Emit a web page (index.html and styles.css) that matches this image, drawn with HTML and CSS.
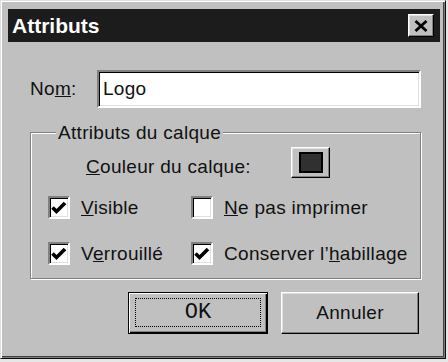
FILE: index.html
```html
<!DOCTYPE html>
<html lang="fr">
<head>
<meta charset="utf-8">
<title>Attributs</title>
<link rel="stylesheet" href="styles.css">
</head>
<body>
<div class="window">
  <div class="titlebar">
    <span class="title">Attributs</span>
    <span class="close">
      <svg width="14" height="12" viewBox="0 0 14 12"><path d="M1.5 1 L12.5 11 M12.5 1 L1.5 11" stroke="#000" stroke-width="2.8" fill="none"/></svg>
    </span>
  </div>
  <div class="content">
    <div class="name-row">
      <span class="name-label">No<u>m</u>:</span>
      <div class="input">Logo</div>
    </div>
    <fieldset class="group">
      <legend class="legend">Attributs du calque</legend>
      <div class="color-row">
        <span class="color-label"><u>C</u>ouleur du calque:</span>
        <span class="color-btn"><span class="swatch"></span></span>
      </div>
      <div class="checks">
        <div class="check">
          <span class="box"><svg width="18" height="18" viewBox="0 0 18 18"><path d="M2.5 8.5 L6.5 12.5 L15 4" stroke="#000" stroke-width="3.6" fill="none"/></svg></span>
          <span class="check-label"><u>V</u>isible</span>
        </div>
        <div class="check">
          <span class="box"></span>
          <span class="check-label"><u>N</u>e pas imprimer</span>
        </div>
        <div class="check">
          <span class="box"><svg width="18" height="18" viewBox="0 0 18 18"><path d="M2.5 8.5 L6.5 12.5 L15 4" stroke="#000" stroke-width="3.6" fill="none"/></svg></span>
          <span class="check-label">V<u>e</u>rrouillé</span>
        </div>
        <div class="check">
          <span class="box"><svg width="18" height="18" viewBox="0 0 18 18"><path d="M2.5 8.5 L6.5 12.5 L15 4" stroke="#000" stroke-width="3.6" fill="none"/></svg></span>
          <span class="check-label">Conserver l’<u>h</u>abillage</span>
        </div>
      </div>
    </fieldset>
    <div class="buttons">
      <span class="btn btn-default"><span class="focus">OK</span></span>
      <span class="btn btn-cancel">Annuler</span>
    </div>
  </div>
</div>
</body>
</html>
```

FILE: styles.css
```css
html, body {
  margin: 0;
  padding: 0;
}
body {
  background: #e6e6e6;
  width: 448px;
  height: 362px;
  overflow: hidden;
  font-family: "Liberation Sans", Arial, sans-serif;
  font-size: 19px;
  letter-spacing: 0.3px;
  color: #111;
}
.window {
  box-sizing: border-box;
  width: 446px;
  height: 359px;
  background: #c0c0c0;
  border: 1px solid;
  border-color: #dfdfdf #0a0a0a #0a0a0a #dfdfdf;
  box-shadow: inset 1px 1px #fff, inset -1px -1px #808080, inset -2px -2px #404040;
  padding: 8px 5px 0 7px;
}
.titlebar {
  height: 33px;
  background: #1c1c1c;
  display: flex;
  align-items: center;
  justify-content: space-between;
  padding: 0 6px 0 4px;
}
.title {
  color: #fff;
  font-weight: bold;
  font-size: 21px;
  letter-spacing: 0;
}
.close {
  box-sizing: border-box;
  width: 26px;
  height: 23px;
  background: #c0c0c0;
  border: 1px solid;
  border-color: #fff #000 #000 #fff;
  box-shadow: inset -1px -1px #808080, inset 1px 1px #dfdfdf;
  display: flex;
  align-items: center;
  justify-content: center;
}
.content {
  padding: 0 19px 0 22px;
}
.name-row {
  display: flex;
  align-items: center;
  margin-top: 28px;
  height: 38px;
}
.name-label {
  width: 67px;
  flex: none;
}
.input {
  box-sizing: border-box;
  flex: 1;
  height: 38px;
  background: #fff;
  border: 2px solid;
  border-color: #808080 #fff #fff #808080;
  box-shadow: inset 1px 1px #000, inset -1px -1px #dfdfdf;
  padding-left: 4px;
  display: flex;
  align-items: center;
}
.group {
  margin: 14px 0 0 0;
  padding: 4px 0 13px 17px;
  border: 1px solid #808080;
  box-shadow: inset 1px 1px #fff, 1px 1px #fff;
}
.legend {
  margin-left: 8px;
  padding: 0 2px;
  line-height: 21px;
  background: #c0c0c0;
}
.color-row {
  display: flex;
  align-items: flex-start;
  height: 31px;
  padding-left: 38px;
}
.color-label {
  width: 205px;
  flex: none;
  margin-top: 9px;
  line-height: 22px;
}
.color-btn {
  box-sizing: border-box;
  width: 39px;
  height: 31px;
  background: #c0c0c0;
  border: 1px solid;
  border-color: #fff #000 #000 #fff;
  box-shadow: inset -1px -1px #808080, inset 1px 1px #dfdfdf;
  display: flex;
  align-items: center;
  justify-content: center;
}
.swatch {
  box-sizing: border-box;
  width: 24px;
  height: 21px;
  background: #303030;
  border: 2px solid #000;
}
.checks {
  display: grid;
  grid-template-columns: 143px auto;
  row-gap: 23px;
  margin-top: 18px;
}
.check {
  display: flex;
  align-items: center;
  gap: 11px;
  height: 23px;
}
.box {
  box-sizing: border-box;
  width: 22px;
  height: 23px;
  background: #fff;
  border: 2px solid;
  border-color: #808080 #fff #fff #808080;
  box-shadow: inset 1px 1px #000, inset -1px -1px #dfdfdf;
  display: flex;
  align-items: center;
  justify-content: center;
}
.buttons {
  display: flex;
  justify-content: flex-end;
  gap: 13px;
  margin-top: 13px;
  padding-right: 2px;
}
.btn {
  box-sizing: border-box;
  height: 42px;
  background: #c0c0c0;
  display: flex;
  align-items: center;
  justify-content: center;
}
.btn-default {
  width: 140px;
  border: 1px solid #000;
  box-shadow: inset 1px 1px #fff, inset -1px -1px #000, inset -2px -2px #808080;
  padding: 5px 6px 6px 6px;
}
.focus {
  flex: 1;
  align-self: stretch;
  border: 1px dotted #000;
  display: flex;
  align-items: center;
  justify-content: center;
  font-family: "Liberation Mono", monospace;
  font-size: 22px;
  letter-spacing: 0;
}
.btn-cancel {
  width: 138px;
  border: 1px solid;
  border-color: #fff #000 #000 #fff;
  box-shadow: inset -1px -1px #808080, inset 1px 1px #dfdfdf;
}
```
